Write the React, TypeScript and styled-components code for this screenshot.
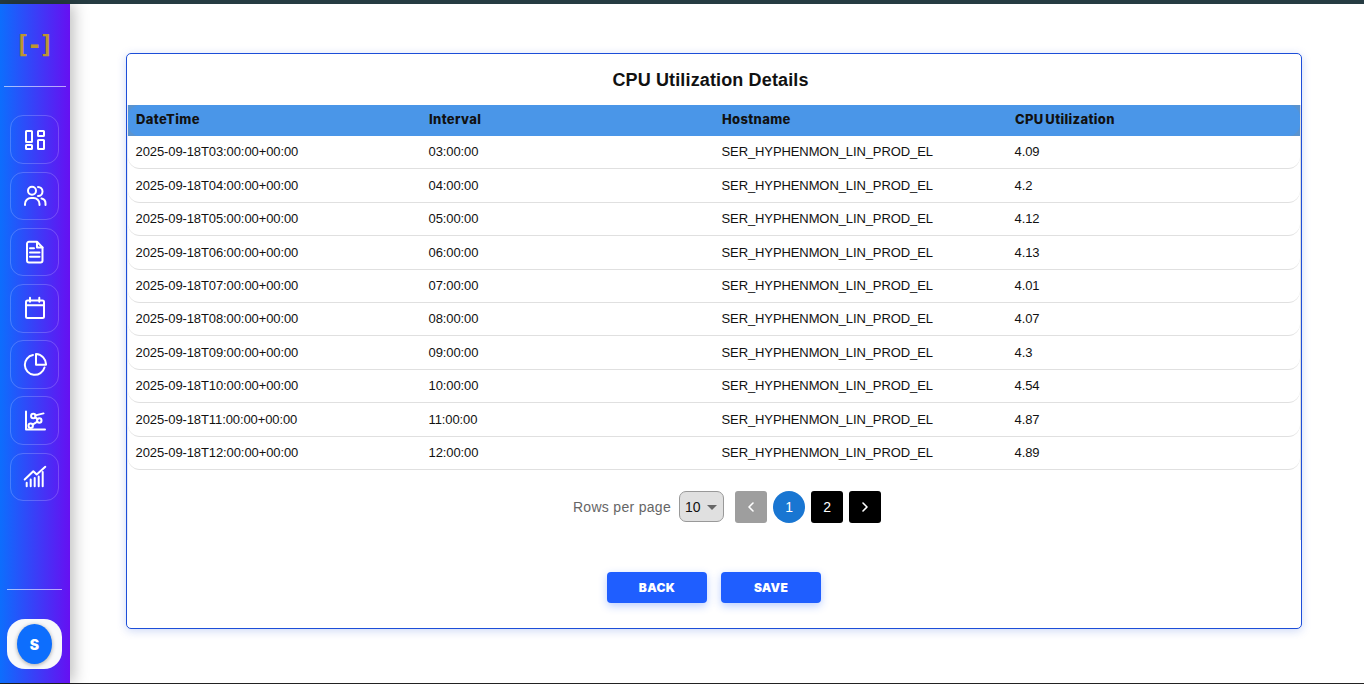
import styled, { createGlobalStyle } from "styled-components";
import { ChevronLeft, ChevronRight } from "lucide-react";

const rows = [
  ["2025-09-18T03:00:00+00:00", "03:00:00", "4.09"],
  ["2025-09-18T04:00:00+00:00", "04:00:00", "4.2"],
  ["2025-09-18T05:00:00+00:00", "05:00:00", "4.12"],
  ["2025-09-18T06:00:00+00:00", "06:00:00", "4.13"],
  ["2025-09-18T07:00:00+00:00", "07:00:00", "4.01"],
  ["2025-09-18T08:00:00+00:00", "08:00:00", "4.07"],
  ["2025-09-18T09:00:00+00:00", "09:00:00", "4.3"],
  ["2025-09-18T10:00:00+00:00", "10:00:00", "4.54"],
  ["2025-09-18T11:00:00+00:00", "11:00:00", "4.87"],
  ["2025-09-18T12:00:00+00:00", "12:00:00", "4.89"],
];

function NavIcon({ children }: { children: React.ReactNode }) {
  return (
    <NavButton>
      <svg width="24" height="24" viewBox="0 0 24 24" fill="none" stroke="#fff" strokeWidth="2" strokeLinecap="round" strokeLinejoin="round">
        {children}
      </svg>
    </NavButton>
  );
}

function App() {
  return (
    <Page>
      <GlobalStyle />
      <TopBar />
      <Shell>
        <Sidebar>
          <Logo>[-]</Logo>
          <Divider />
          <Nav>
            <NavIcon>
              <rect x="3" y="3" width="6" height="11" rx="0.6" />
              <rect x="15" y="3" width="6" height="5" rx="0.6" />
              <rect x="15" y="12" width="6" height="9" rx="0.6" />
              <rect x="3" y="17" width="6" height="4" rx="0.6" />
            </NavIcon>
            <NavIcon>
              <circle cx="9" cy="6.800" r="4" />
              <path d="M2 21v-1a6 6 0 0 1 6-6h2.500a6 6 0 0 1 6 6v1" />
              <path d="M15 3a4.500 4.500 0 0 1 0 9" />
              <path d="M18.500 14.500a5 5 0 0 1 4 5V21" />
            </NavIcon>
            <NavIcon>
              <path d="M14 1.800H6a2 2 0 0 0-2 2V20.500a2 2 0 0 0 2 2h11.500a2 2 0 0 0 2-2V7.500z" />
              <path d="M14 2v5.500h5.500" />
              <path d="M7 8.200h4M7 12.500h9.500M7 16.800h9.500" />
            </NavIcon>
            <NavIcon>
              <rect x="3" y="4.500" width="18" height="17.500" rx="1.500" />
              <path d="M3 9.200h18M7 1.800v4M16.300 1.800v4" />
            </NavIcon>
            <NavIcon>
              <path d="M10 3A10 10 0 1 0 21.500 15.500" />
              <path d="M13 2V12.800H23A10.500 10.500 0 0 0 13 2z" />
            </NavIcon>
            <NavIcon>
              <path d="M3 2.500v18h19" />
              <circle cx="7.700" cy="16.800" r="2.200" />
              <circle cx="16.300" cy="11.500" r="2.200" />
              <circle cx="10.300" cy="7" r="2.200" />
              <path d="M9.600 15.600l4.800-2.900M12.200 8.200l2.300 2.100M12.400 6.400l8.100-2" />
            </NavIcon>
            <NavIcon>
              <path d="M1.700 14.500l8.600-8.300 3.400 3.300 8.600-7.700" />
              <path d="M3.700 21.200v-3.400M7.700 21.200v-6.700M11.700 21.200V13M15.700 21.200v-9.700M19.700 21.200V7" />
            </NavIcon>
          </Nav>
          <BottomArea>
            <Divider $inset />
            <AvatarBox>
              <Avatar>S</Avatar>
            </AvatarBox>
          </BottomArea>
        </Sidebar>
        <Main>
          <Card>
            <Title>CPU Utilization Details</Title>
            <TableWrap>
              <HeaderBand>
                <HeaderRow>
                  <HeadCell>DateTime</HeadCell>
                  <HeadCell>Interval</HeadCell>
                  <HeadCell>Hostname</HeadCell>
                  <HeadCell>CPU Utilization</HeadCell>
                </HeaderRow>
              </HeaderBand>
              {rows.map((r) => (
                <Row key={r[0]}>
                  <Cell>{r[0]}</Cell>
                  <Cell>{r[1]}</Cell>
                  <Cell>SER_HYPHENMON_LIN_PROD_EL</Cell>
                  <Cell>{r[2]}</Cell>
                </Row>
              ))}
              <Pagination>
                <RowsLabel>Rows per page</RowsLabel>
                <PageSelect>
                  10
                  <Caret />
                </PageSelect>
                <Pager>
                  <PageButton $variant="disabled">
                    <ChevronLeft size={16} strokeWidth={2.4} />
                  </PageButton>
                  <PageButton $variant="active">1</PageButton>
                  <PageButton>2</PageButton>
                  <PageButton>
                    <ChevronRight size={16} strokeWidth={2.4} />
                  </PageButton>
                </Pager>
              </Pagination>
            </TableWrap>
            <Actions>
              <ActionButton>BACK</ActionButton>
              <ActionButton>SAVE</ActionButton>
            </Actions>
          </Card>
        </Main>
      </Shell>
      <BottomLine />
    </Page>
  );
}
export default App;

const GlobalStyle = createGlobalStyle`
  html, body {
    margin: 0;
    padding: 0;
    background: #fff;
    overflow: hidden;
  }
  * {
    box-sizing: border-box;
  }
`;

const Page = styled.div`
  width: 1364px;
  height: 684px;
  display: flex;
  flex-direction: column;
  font-family: "Liberation Sans", Arial, sans-serif;
`;

const TopBar = styled.div`
  height: 4px;
  background: #263c42;
`;

const BottomLine = styled.div`
  height: 1px;
  background: #222;
`;

const Shell = styled.div`
  flex: 1;
  display: flex;
  min-height: 0;
`;

const Sidebar = styled.aside`
  flex: 0 0 70px;
  display: flex;
  flex-direction: column;
  padding: 0 4px;
  background: linear-gradient(90deg, #0d6efd 0%, #6610f2 100%);
  box-shadow: 4px 0 14px rgba(0, 0, 0, 0.25);
  z-index: 1;
`;

const Logo = styled.div`
  height: 82px;
  padding: 0 4px 1px 0;
  display: flex;
  align-items: center;
  justify-content: center;
  color: #bd9630;
  font-family: "DejaVu Sans Mono", monospace;
  font-size: 25px;
  font-weight: 700;
  letter-spacing: -3px;
`;

const Divider = styled.div<{ $inset?: boolean }>`
  height: 1px;
  margin: ${(p) => (p.$inset ? "0 4px 0 3px" : "0")};
  background: rgba(255, 255, 255, 0.6);
`;

const Nav = styled.nav`
  display: flex;
  flex-direction: column;
  gap: 7.6px;
  margin-top: 28.4px;
  padding: 0 7px 0 6px;
`;

const NavButton = styled.div`
  height: 48.6px;
  display: flex;
  align-items: center;
  justify-content: center;
  border: 1px solid rgba(255, 255, 255, 0.2);
  border-radius: 13px;
`;

const BottomArea = styled.div`
  margin-top: auto;
  padding-bottom: 14px;
`;

const AvatarBox = styled.div`
  height: 50px;
  margin: 29px 4px 0 3px;
  display: flex;
  align-items: center;
  justify-content: center;
  background: #f8f9fb;
  border-radius: 18px;
`;

const Avatar = styled.div`
  width: 35px;
  height: 40px;
  display: flex;
  align-items: center;
  justify-content: center;
  border-radius: 50%;
  background: #0d6efd;
  color: #fff;
  font-family: Inter, sans-serif;
  font-size: 14px;
  font-weight: 900;
  box-shadow: 0 1px 4px rgba(0, 0, 0, 0.35);
`;

const Main = styled.main`
  flex: 1;
  padding: 49px 62px 0 56px;
`;

const Card = styled.section`
  height: 576px;
  display: flex;
  flex-direction: column;
  background: #fff;
  border: 1px solid #1d4ed8;
  border-radius: 5px;
  box-shadow: 0 2px 10px rgba(29, 78, 216, 0.22);
`;

const Title = styled.h2`
  height: 51px;
  margin: 0;
  display: flex;
  align-items: center;
  justify-content: center;
  padding: 1px 7px 0 0;
  color: #111;
  font-size: 18px;
  font-weight: 700;
  letter-spacing: 0.14px;
`;

const TableWrap = styled.div`
  height: 435px;
  border-right: 1px solid #dedede;
  border-left: 1px solid #e6e9f8;
`;

const HeaderBand = styled.div`
  background: #5a93cf;
`;

const HeaderRow = styled.div`
  height: 31px;
  display: grid;
  grid-template-columns: repeat(4, 293px);
  align-items: center;
  padding-bottom: 3px;
  background: #4a96e8;
  border-radius: 12px;
`;

const HeadCell = styled.div`
  padding-left: 8px;
  color: #111;
  font-family: Inter, sans-serif;
  font-size: 13px;
  font-weight: 800;
  letter-spacing: 0.35px;
  word-spacing: -1.5px;
`;

const Row = styled.div`
  height: 33.4px;
  padding-bottom: 0.6px;
  display: grid;
  grid-template-columns: repeat(4, 293px);
  align-items: center;
  border-bottom: 1px solid #e0e0e0;
  border-radius: 0 0 12px 12px;
`;

const Cell = styled.div`
  padding-left: 7.5px;
  color: #111;
  font-size: 13px;
  letter-spacing: -0.1px;
`;

const Pagination = styled.div`
  margin-top: 21px;
  display: flex;
  align-items: center;
  justify-content: center;
  padding-left: 26px;
`;

const RowsLabel = styled.span`
  color: #666;
  font-size: 14px;
  letter-spacing: 0.3px;
`;

const PageSelect = styled.div`
  width: 45px;
  height: 31px;
  margin-left: 8px;
  padding-left: 5px;
  display: flex;
  align-items: center;
  gap: 6px;
  background: #e0e0e0;
  border: 1px solid #999;
  border-radius: 7px;
  color: #111;
  font-size: 14px;
`;

const Caret = styled.span`
  border-left: 5px solid transparent;
  border-right: 5px solid transparent;
  border-top: 5px solid #666;
  margin-top: 2px;
`;

const Pager = styled.div`
  display: flex;
  gap: 6px;
  margin-left: 11px;
`;

const PageButton = styled.button<{ $variant?: "disabled" | "active" }>`
  width: 32px;
  height: 32px;
  padding: 0;
  display: flex;
  align-items: center;
  justify-content: center;
  border: none;
  border-radius: ${(p) => (p.$variant === "active" ? "50%" : "3px")};
  background: ${(p) =>
    p.$variant === "active" ? "#1976d2" : p.$variant === "disabled" ? "#9e9e9e" : "#000"};
  color: #fff;
  font-family: "Liberation Sans", Arial, sans-serif;
  font-size: 14px;
`;

const Actions = styled.div`
  margin-top: 32px;
  display: flex;
  justify-content: center;
  gap: 14px;
`;

const ActionButton = styled.button`
  width: 100px;
  height: 31px;
  border: none;
  border-radius: 4px;
  background: #1f5eff;
  color: #fff;
  font-family: Inter, sans-serif;
  font-size: 12px;
  font-weight: 900;
  letter-spacing: 0.3px;
  box-shadow: 0 3px 8px rgba(31, 94, 255, 0.3);
`;
